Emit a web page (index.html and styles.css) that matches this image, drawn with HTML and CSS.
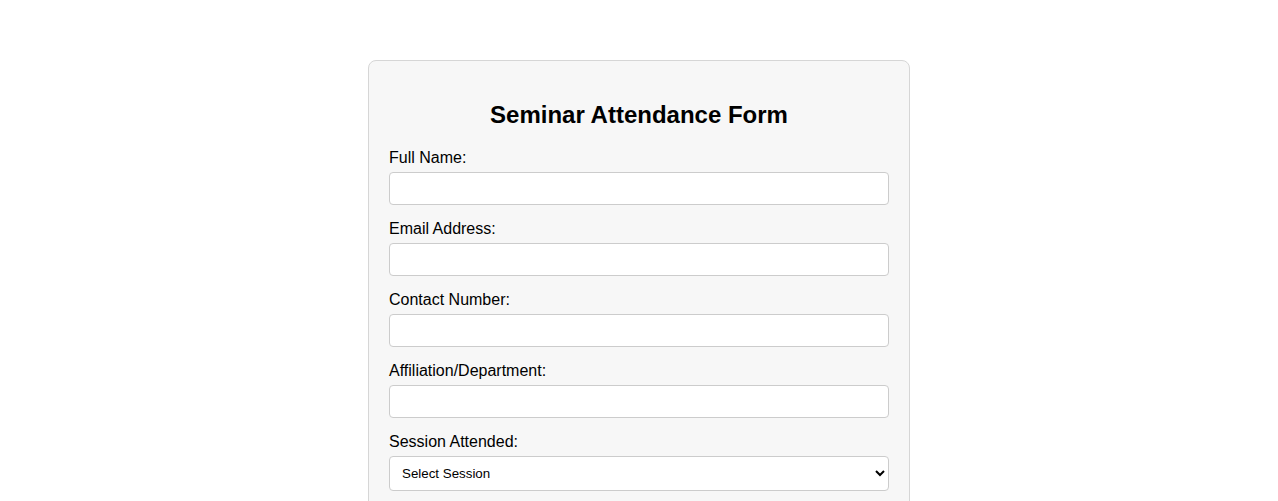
FILE: index.html
```html
<!DOCTYPE html>
<html lang="en">
<head>
<meta charset="UTF-8">
<meta name="viewport" content="width=device-width, initial-scale=1.0">
<title>Seminar Attendance Form</title>
<link rel="stylesheet" href="styles.css">
</head>
<body>
<div class="container">
<h2>Seminar Attendance Form</h2>
<form id="attendance-form">
<div class="form-group">
<label for="fullname">Full Name:</label>
<input type="text" id="fullname" required>
</div>
<div class="form-group">
<label for="email">Email Address:</label>
<input type="email" id="email" required>
</div>
<div class="form-group">
<label for="contact">Contact Number:</label>
<input type="text" id="contact" required>
</div>
<div class="form-group">
<label for="affiliation">Affiliation/Department:</label>
<input type="text" id="affiliation">
</div>
<div class="form-group">
<label for="session">Session Attended:</label>
<select id="session" required>
<option value="">Select Session</option>
<option value="morning">Morning Session</option>
<option value="afternoon">Afternoon Session</option>
<option value="full">Full Day</option>
</select>
</div>
<div class="form-group">
<label for="feedback">Feedback:</label>
<textarea id="feedback" rows="4"></textarea>
</div>
<button type="submit">Submit Attendance</button>
</form>
</div>
</body>
</html>
```

FILE: styles.css
```css
body {
font-family: "Liberation Sans", Arial, sans-serif;
background-color: #fff;
margin: 0;
padding: 60px 20px 20px;
}

.container {
max-width: 500px;
margin: 0 auto;
background: #f7f7f7;
padding: 20px;
border: 1px solid #d6d6d6;
border-radius: 8px;
}

h2 {
text-align: center;
font-size: 24px;
margin: 20px 0;
}

.form-group {
margin-bottom: 15px;
}

label {
display: block;
margin-bottom: 5px;
}

input[type="text"], input[type="email"], textarea, select {
width: 100%;
box-sizing: border-box;
padding: 8px;
border: 1px solid #ccc;
border-radius: 4px;
background: #fff;
font-family: "Liberation Sans", Arial, sans-serif;
}

button {
width: 100%;
padding: 10px;
background: #007bff;
color: #fff;
border: none;
border-radius: 4px;
cursor: pointer;
}
```
